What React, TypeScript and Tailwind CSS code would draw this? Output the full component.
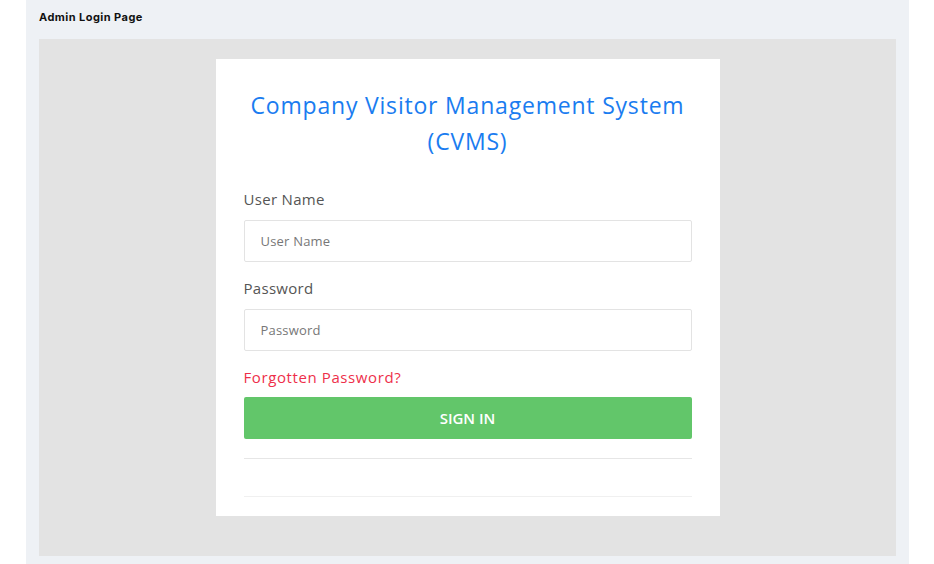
import React from 'react';

export default function App() {
  return (
    <div className="min-h-screen w-full bg-white" style={{ fontFamily: '"Open Sans", "Liberation Sans", sans-serif' }}>
      <div className="mx-[26px] w-[883px] min-h-[564px] bg-[#eef1f5] px-[13px] pb-[8px]">
        <div className="h-[39px] pt-[10px]">
          <h1 className="text-[11px] leading-[14px] font-bold text-[#111] tracking-[0.45px]" style={{ fontFamily: 'Inter, "Open Sans", sans-serif' }}>
            Admin Login Page
          </h1>
        </div>
        <div className="bg-[#e3e3e3] h-[517px] pt-[20px] flex justify-center">
          <div className="w-[504px] h-[457px] bg-white px-[28px] pt-[28px]">
            <h2 className="text-center text-[23px] leading-[36px] tracking-[0.8px] text-[#1a7cf0] font-normal">
              Company Visitor Management System (CVMS)
            </h2>
            <form className="mt-[29px]" onSubmit={(e) => e.preventDefault()}>
              <label className="block text-[15px] leading-[22px] tracking-[0.3px] text-[#555]">User Name</label>
              <input
                type="text"
                placeholder="User Name"
                className="mt-[10px] block w-full h-[42px] border border-[#e3e3e3] rounded-[2px] px-[16px] text-[13px] tracking-[0.2px] text-[#555] placeholder:text-[#777] outline-none"
              />
              <label className="block mt-[15px] text-[15px] leading-[22px] tracking-[0.3px] text-[#555]">Password</label>
              <input
                type="password"
                placeholder="Password"
                className="mt-[10px] block w-full h-[42px] border border-[#e3e3e3] rounded-[2px] px-[16px] text-[13px] tracking-[0.2px] text-[#555] placeholder:text-[#777] outline-none"
              />
              <a href="#" className="block mt-[15px] text-[15px] leading-[22px] tracking-[0.6px] text-[#ee2f4a]">
                Forgotten Password?
              </a>
              <button
                type="submit"
                className="mt-[9px] w-full h-[42px] bg-[#62c66a] rounded-[2px] text-white text-[15px] font-semibold"
              >
                SIGN IN
              </button>
              <hr className="mt-[19px] border-t border-[#e6e6e6]" />
              <hr className="mt-[37px] border-t border-[#f0f0f0]" />
            </form>
          </div>
        </div>
      </div>
    </div>
  );
}
